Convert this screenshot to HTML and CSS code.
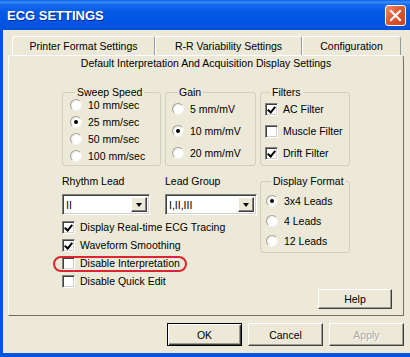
FILE: index.html
```html
<!DOCTYPE html>
<html lang="en">
<head>
    <meta charset="UTF-8">
    <title>ECG Settings</title>
    <link rel="stylesheet" href="styles.css">
</head>
<body>
    <div class="window">
        <div class="titlebar">
            <span class="title">ECG SETTINGS</span>
            <span class="close">
                <svg width="13" height="13" viewBox="0 0 13 13"><path d="M2 2 L11 11 M11 2 L2 11" stroke="#fff" stroke-width="2.2" stroke-linecap="square"/></svg>
            </span>
        </div>

        <div class="client">
            <div class="tabs">
                <div class="tab tab-printer">Printer Format Settings</div>
                <div class="tab tab-rr">R-R Variability Settings</div>
                <div class="tab tab-config">Configuration</div>
            </div>

            <div class="panel">
                <div class="panel-title">Default Interpretation And Acquisition Display Settings</div>

                <div class="panel-body">
                    <fieldset class="group sweep">
                        <legend>Sweep Speed</legend>
                        <div class="opts">
                            <div class="opt"><span class="radio"></span>10 mm/sec</div>
                            <div class="opt"><span class="radio on"></span>25 mm/sec</div>
                            <div class="opt"><span class="radio"></span>50 mm/sec</div>
                            <div class="opt"><span class="radio"></span>100 mm/sec</div>
                        </div>
                    </fieldset>

                    <fieldset class="group gain">
                        <legend>Gain</legend>
                        <div class="opts">
                            <div class="opt"><span class="radio"></span>5 mm/mV</div>
                            <div class="opt"><span class="radio on"></span>10 mm/mV</div>
                            <div class="opt"><span class="radio"></span>20 mm/mV</div>
                        </div>
                    </fieldset>

                    <fieldset class="group filters">
                        <legend>Filters</legend>
                        <div class="opts">
                            <div class="opt"><span class="check on"></span>AC Filter</div>
                            <div class="opt"><span class="check"></span>Muscle Filter</div>
                            <div class="opt"><span class="check on"></span>Drift Filter</div>
                        </div>
                    </fieldset>

                    <div class="leads">
                        <div class="fields">
                            <div class="field">
                                <label>Rhythm Lead</label>
                                <div class="combo combo-rhythm">
                                    <span class="combo-value">II</span>
                                    <span class="combo-btn"><span class="arrow"></span></span>
                                </div>
                            </div>
                            <div class="field">
                                <label>Lead Group</label>
                                <div class="combo combo-group">
                                    <span class="combo-value">I,II,III</span>
                                    <span class="combo-btn"><span class="arrow"></span></span>
                                </div>
                            </div>
                        </div>

                        <div class="checks">
                            <div class="opt row"><span class="check on"></span>Display Real-time ECG Tracing</div>
                            <div class="opt row"><span class="check on"></span>Waveform Smoothing</div>
                            <div class="opt row marked"><span class="check"></span>Disable Interpretation<span class="annot"></span></div>
                            <div class="opt row"><span class="check"></span>Disable Quick Edit</div>
                        </div>
                    </div>

                    <div class="side">
                        <fieldset class="group format">
                            <legend>Display Format</legend>
                            <div class="opts">
                                <div class="opt"><span class="radio on"></span>3x4 Leads</div>
                                <div class="opt"><span class="radio"></span>4 Leads</div>
                                <div class="opt"><span class="radio"></span>12 Leads</div>
                            </div>
                        </fieldset>
                        <button class="btn help">Help</button>
                    </div>
                </div>
            </div>

            <div class="actions">
                <button class="btn default">OK</button>
                <button class="btn">Cancel</button>
                <button class="btn disabled">Apply</button>
            </div>
        </div>
    </div>
</body>
</html>
```

FILE: styles.css
```css
body {
    margin: 0;
    background: #fff;
}
.window {
    width: 410px;
    height: 357px;
    display: flex;
    flex-direction: column;
    background: #0054e3;
    font-family: "Liberation Sans", Arial, sans-serif;
    font-size: 10.5px;
    color: #000;
}

/* title bar */
.titlebar {
    height: 30px;
    flex: none;
    display: flex;
    align-items: center;
    justify-content: space-between;
    padding: 0 4px 0 7px;
    background: linear-gradient(180deg, #0a5fe8 0%, #3d8ef7 7%, #166bed 15%, #0459e6 40%, #0054e3 80%, #004fd6 100%);
}
.title {
    color: #fff;
    font-weight: bold;
    font-size: 13px;
    text-shadow: 1px 1px 0 #0a2a8c;
}
.close {
    width: 19px;
    height: 19px;
    display: flex;
    align-items: center;
    justify-content: center;
    border: 1px solid #fff;
    border-radius: 3px;
    background: linear-gradient(135deg, #f08c6a 0%, #e0592f 45%, #cf421b 100%);
}

/* dialog body */
.client {
    flex: 1;
    margin: 0 0 4px 3px;
    background: #ece9d8;
    display: flex;
    flex-direction: column;
    padding-top: 6px;
}

.tabs {
    display: flex;
    margin-left: 9px;
    height: 19px;
}
.tab {
    box-sizing: border-box;
    height: 19px;
    border-top: 1px solid #fff;
    border-left: 1px solid #fff;
    border-right: 1px solid #919b9c;
    border-radius: 3px 3px 0 0;
    text-align: center;
    line-height: 18px;
}
.tab-printer { width: 143px; }
.tab-rr { width: 147px; }
.tab-config { width: 99px; }

.panel {
    width: 396px;
    margin-left: 5px;
    box-sizing: border-box;
    border-top: 1px solid #fff;
    border-left: 1px solid #fff;
    border-right: 1px solid #716f64;
    border-bottom: 1px solid #716f64;
    border-radius: 3px 3px 0 0;
}
.panel-title {
    text-align: center;
    line-height: 14px;
}
.panel-body {
    display: grid;
    grid-template-columns: 99px 91px 1fr;
    column-gap: 4px;
    row-gap: 9px;
    padding: 16px 11px 6px 53px;
}

/* group boxes */
.group {
    margin: 0;
    padding: 0 0 1px 0;
    min-width: 0;
    border: 1px solid #d0d0bf;
    border-radius: 3px;
    display: flex;
    flex-direction: column;
}
.group legend {
    padding: 0 2px;
    margin-left: 5px;
    line-height: 12px;
}
.opts {
    flex: 1;
    display: flex;
    flex-direction: column;
}
.opts .opt {
    flex: 1;
}
.sweep { padding-left: 7px; }
.sweep .opts { margin-top: -2px; }
.sweep .opts .opt {
    flex: none;
    height: 17px;
}
.gain { padding-left: 6px; }
.filters { padding-left: 4px; width: 90px; box-sizing: border-box; }
.format {
    width: 90px;
    box-sizing: border-box;
    padding: 4px 0 1px 5px;
    margin-bottom: 36px;
}
.format .opts .opt { flex: none; height: 20px; }

.opt {
    display: flex;
    align-items: center;
    white-space: nowrap;
}

.radio {
    width: 12px;
    height: 12px;
    box-sizing: border-box;
    margin-right: 6px;
    border-radius: 50%;
    border: 1px solid;
    border-color: #a3a39a #f4f4f0 #f4f4f0 #a3a39a;
    background: radial-gradient(circle at 62% 62%, #fff 45%, #dedbd0 100%);
    display: flex;
    align-items: center;
    justify-content: center;
}
.radio.on::after {
    content: "";
    width: 4px;
    height: 4px;
    border-radius: 50%;
    background: #000;
}

.check {
    width: 13px;
    height: 13px;
    box-sizing: border-box;
    margin-right: 5px;
    border: 1px solid;
    border-color: #808080 #fff #fff #808080;
    box-shadow: inset 1px 1px 0 #404040, inset -1px -1px 0 #d4d0c8;
    background: #fff;
    position: relative;
}
.check.on::after {
    content: "";
    position: absolute;
    left: 3px;
    top: 1px;
    width: 3px;
    height: 6px;
    border: solid #000;
    border-width: 0 2px 2px 0;
    transform: rotate(40deg);
}

/* combos and checks */
.leads {
    grid-column: 1 / 3;
}
.fields {
    display: grid;
    grid-template-columns: 99px 91px;
    column-gap: 4px;
}
.field label {
    display: block;
    line-height: 13px;
}
.combo {
    margin-top: 6px;
    height: 21px;
    box-sizing: border-box;
    display: flex;
    align-items: center;
    background: #fff;
    border: 1px solid;
    border-color: #808080 #fff #fff #808080;
    box-shadow: inset 1px 1px 0 #404040, inset -1px -1px 0 #d4d0c8;
    padding: 2px 2px 2px 3px;
}
.combo-rhythm { width: 88px; }
.combo-group { width: 92px; }
.combo-value {
    flex: 1;
}
.combo-btn {
    width: 16px;
    height: 15px;
    box-sizing: border-box;
    display: flex;
    align-items: center;
    justify-content: center;
    background: #ece9d8;
    border: 1px solid;
    border-color: #fff #404040 #404040 #fff;
    box-shadow: inset -1px -1px 0 #808080;
}
.arrow {
    width: 0;
    height: 0;
    border-left: 3.5px solid transparent;
    border-right: 3.5px solid transparent;
    border-top: 4px solid #000;
}

.checks {
    margin-top: 3px;
}
.checks .row {
    height: 18px;
}
.marked {
    position: relative;
}
.annot {
    position: absolute;
    left: -9px;
    top: 2px;
    width: 134px;
    height: 16px;
    box-sizing: border-box;
    border: 2px solid #d9262f;
    border-radius: 9px;
}

.side {
    display: flex;
    flex-direction: column;
    align-items: flex-start;
}

/* buttons */
.btn {
    width: 75px;
    height: 23px;
    padding: 0;
    font: inherit;
    color: #000;
    background: #ece9d8;
    border: 1px solid;
    border-color: #fff #404040 #404040 #fff;
    box-shadow: inset -1px -1px 0 #a09e92;
}
.help {
    align-self: flex-end;
    width: 74px;
    height: 20px;
}
.btn.default {
    border: 1px solid #000;
    box-shadow: inset 1px 1px 0 #fff, inset -1px -1px 0 #404040, inset -2px -2px 0 #a09e92;
}
.btn.disabled {
    color: #aca899;
    text-shadow: 1px 1px 0 #fff;
}
.actions {
    display: flex;
    justify-content: flex-end;
    gap: 6px;
    margin-top: 7px;
    padding-right: 6px;
}
```
